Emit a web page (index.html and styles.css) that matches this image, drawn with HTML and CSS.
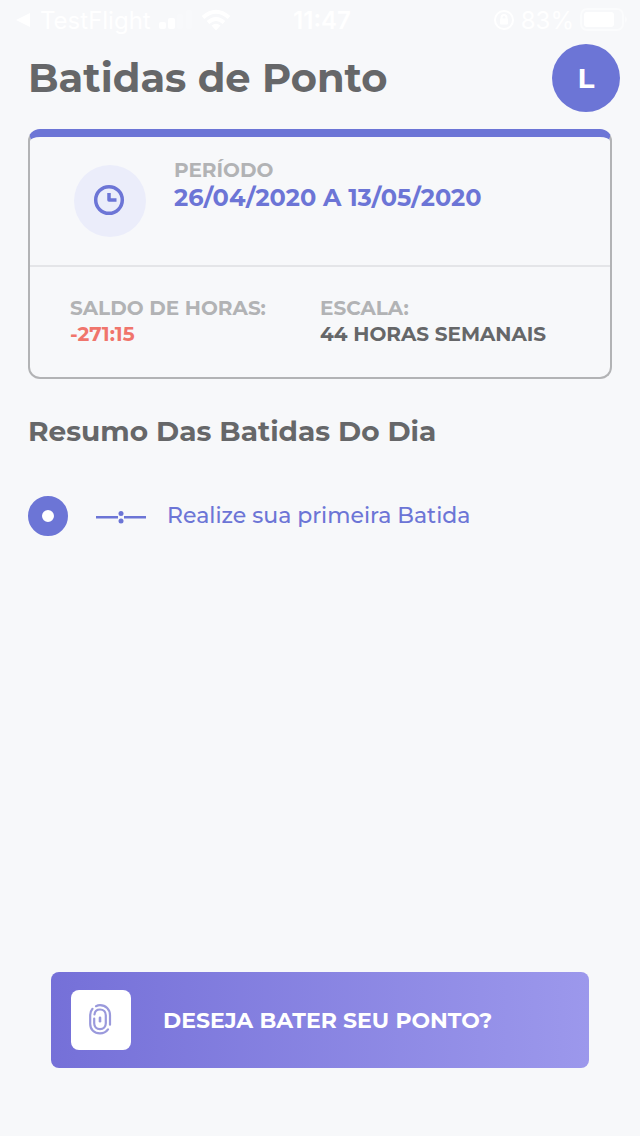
FILE: index.html
```html
<!DOCTYPE html>
<html lang="pt-BR">
<head>
<meta charset="utf-8">
<meta name="viewport" content="width=device-width, initial-scale=1">
<title>Batidas de Ponto</title>
<link rel="stylesheet" href="styles.css">
</head>
<body>
<div class="app">
  <div class="status">
    <div class="status-side">
      <svg width="16" height="16" viewBox="0 0 16 16" fill="currentColor"><path d="M0 8 14 1v14z"/></svg>
      <span class="status-back">TestFlight</span>
      <svg class="signal" width="34" height="20" viewBox="0 0 34 20" fill="currentColor"><rect x="0" y="12" width="7" height="7" rx="2"/><rect x="9" y="8" width="7" height="11" rx="2"/><rect x="18" y="4" width="6" height="15" rx="2" opacity=".2"/><rect x="27" y="0" width="6" height="19" rx="2" opacity=".2"/></svg>
      <svg width="30" height="22" viewBox="0 0 30 22" fill="none" stroke="currentColor" stroke-width="4"><path d="M2 8.500Q15-3 28 8.500M7 13.500q8-7 16 0"/><path d="m10.500 16.500 4.500 5 4.500-5q-4.500-3.500-9 0z" fill="currentColor" stroke="none"/></svg>
    </div>
    <span class="status-time">11:47</span>
    <div class="status-side status-end">
      <svg width="22" height="22" viewBox="0 0 22 22" fill="none" stroke="currentColor" stroke-width="2"><circle cx="11" cy="11" r="9"/><rect x="7" y="9.500" width="8" height="6" rx="1" fill="currentColor" stroke="none"/><path d="M8.500 10V8.500a2.500 2.500 0 0 1 5 0V10"/></svg>
      <span class="status-battery">83%</span>
      <svg width="48" height="24" viewBox="0 0 48 24"><rect x="1" y="1" width="42" height="21" rx="6" fill="none" stroke="currentColor" stroke-width="2" opacity=".5"/><rect x="4" y="4" width="30" height="15" rx="3" fill="currentColor"/><path d="M45 8q4 3.500 0 7z" fill="currentColor" opacity=".5"/></svg>
    </div>
  </div>

  <header class="header">
    <h1 class="title">Batidas de Ponto</h1>
    <button class="avatar" type="button">L</button>
  </header>

  <main class="main">
    <section class="card">
      <div class="period">
        <span class="period-icon">
          <svg width="34" height="34" viewBox="0 0 34 34" fill="none" stroke="currentColor" stroke-width="3.500"><circle cx="16" cy="16" r="13.300"/><path d="M16 9v7h7.500" stroke-linejoin="round"/></svg>
        </span>
        <div>
          <p class="label">PERÍODO</p>
          <p class="period-value">26/04/2020 A 13/05/2020</p>
        </div>
      </div>
      <div class="facts">
        <div class="fact">
          <p class="label">SALDO DE HORAS:</p>
          <p class="value negative">-271:15</p>
        </div>
        <div>
          <p class="label">ESCALA:</p>
          <p class="value">44 HORAS SEMANAIS</p>
        </div>
      </div>
    </section>

    <h2 class="subtitle">Resumo Das Batidas Do Dia</h2>
    <div class="entry">
      <span class="dot"></span>
      <svg class="blank-time" width="50" height="14" viewBox="0 0 50 14" fill="currentColor"><rect x="0" y="5" width="22" height="2.500"/><rect x="28" y="5" width="22" height="2.500"/><circle cx="25" cy="2.500" r="2.500"/><circle cx="25" cy="10" r="2.500"/></svg>
      <p class="entry-text">Realize sua primeira Batida</p>
    </div>
  </main>

  <button class="punch" type="button">
    <span class="punch-icon">
      <svg class="fingerprint" width="24" height="32" viewBox="0 0 24 32" fill="none" stroke="currentColor" stroke-width="2.200" stroke-linecap="round"><path d="M7 2.200Q9 1.200 11 1.200c5.800 0 10 4.200 10 10v9.500M3.500 4.800Q1.200 7.500 1.200 11v9c0 5.500 4 9.300 9.800 9.300 3.300 0 6-1.200 8-4"/><path d="M5.500 10.500Q6 5.500 11 5.500c3.500 0 5.800 2.300 5.800 5.800v8c0 3.500-2.300 5.800-5.800 5.800s-5.800-2.300-5.800-5.800V14.500"/><path d="M11 13.800v3.500" stroke-width="2.600"/></svg>
    </span>
    <span>DESEJA BATER SEU PONTO?</span>
  </button>
</div>
</body>
</html>
```
FILE: styles.css
```css
:root {
  --primary: #6c75d6;
  --text: #666769;
  --muted: #b2b3b5;
  --bg: #f7f8fa;
}

* {
  box-sizing: border-box;
}

body {
  margin: 0;
  background: var(--bg);
  color: var(--text);
  font-family: Montserrat, Inter, "Open Sans", sans-serif;
}

h1, h2, p {
  margin: 0;
}

button {
  border: 0;
  font: inherit;
  cursor: pointer;
}

svg {
  display: block;
  flex: none;
}

.app {
  display: flex;
  flex-direction: column;
  min-height: 100vh;
  padding-bottom: 68px;
}

.status {
  display: grid;
  grid-template-columns: 1fr auto 1fr;
  align-items: center;
  height: 40px;
  padding: 0 12px 0 16px;
  color: #fff;
  font-family: Inter, sans-serif;
  font-size: 24px;
}

.status-side {
  display: flex;
  align-items: center;
  gap: 8px;
}

.status-end {
  justify-content: flex-end;
  gap: 6px;
}

.status-time {
  font-weight: 600;
}

.header {
  display: flex;
  align-items: center;
  justify-content: space-between;
  padding: 4px 20px 0 28px;
}

.title {
  font-size: 40px;
  font-weight: 700;
  line-height: 48px;
}

.avatar {
  width: 68px;
  height: 68px;
  border-radius: 50%;
  background: var(--primary);
  color: #fff;
  font-size: 28px;
  font-weight: 700;
}

.main {
  padding: 17px 28px 40px;
}

.card {
  border: 2px solid var(--muted);
  border-top: 8px solid var(--primary);
  border-radius: 12px;
}

.period {
  display: flex;
  align-items: flex-start;
  gap: 28px;
  padding: 20px 44px 28px;
  border-bottom: 2px solid #e4e5e8;
}

.period-icon {
  display: grid;
  place-items: center;
  flex: none;
  width: 72px;
  height: 72px;
  margin-top: 8px;
  border-radius: 50%;
  background: #ebedfa;
  color: var(--primary);
}

.label {
  color: var(--muted);
  font-size: 20px;
  font-weight: 700;
  line-height: 26px;
}

.period-value {
  color: var(--primary);
  font-size: 24px;
  font-weight: 700;
  line-height: 30px;
}

.facts {
  display: grid;
  grid-template-columns: 1fr 1fr;
  padding: 28px 0 30px;
}

.fact {
  padding-left: 40px;
}

.value {
  font-size: 20px;
  font-weight: 700;
  line-height: 26px;
}

.negative {
  color: #f0756c;
}

.subtitle {
  margin-top: 34px;
  font-size: 28px;
  font-weight: 700;
  line-height: 36px;
}

.entry {
  display: flex;
  align-items: center;
  margin-top: 47px;
  color: var(--primary);
}

.dot {
  width: 40px;
  height: 40px;
  border: 14px solid var(--primary);
  border-radius: 50%;
  background: #fff;
}

.blank-time {
  margin: 3px 21px 0 28px;
}

.entry-text {
  font-size: 22px;
  font-weight: 500;
  line-height: 32px;
}

.punch {
  display: flex;
  align-items: center;
  gap: 32px;
  margin: auto 51px 0;
  padding: 18px 20px;
  border-radius: 8px;
  background: linear-gradient(90deg, #7570d8, #9c98ec);
  color: #fff;
  font-size: 22px;
  font-weight: 700;
  text-align: left;
}

.punch-icon {
  display: grid;
  place-items: center;
  flex: none;
  width: 60px;
  height: 60px;
  border-radius: 8px;
  background: #fff;
  color: #9a99dc;
}
```
